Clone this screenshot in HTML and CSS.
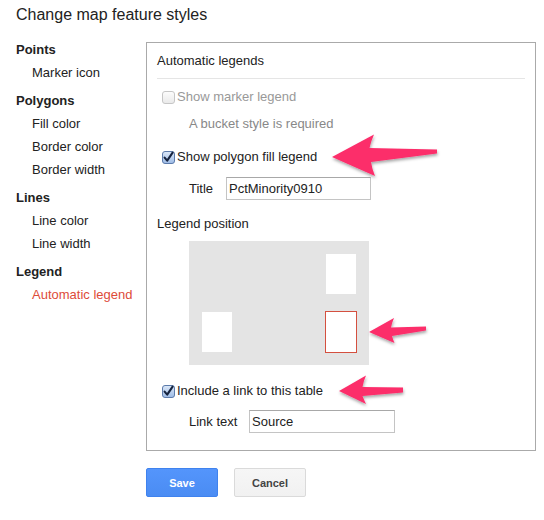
FILE: index.html
```html
<!DOCTYPE html>
<html>
<head>
<meta charset="utf-8">
<title>Change map feature styles</title>
<link rel="stylesheet" href="styles.css">
</head>
<body>
<h1 class="title">Change map feature styles</h1>
<div class="main">
  <nav class="nav">
    <div class="nav-group">
      <div class="nav-head">Points</div>
      <div class="nav-item">Marker icon</div>
    </div>
    <div class="nav-group">
      <div class="nav-head">Polygons</div>
      <div class="nav-item">Fill color</div>
      <div class="nav-item">Border color</div>
      <div class="nav-item">Border width</div>
    </div>
    <div class="nav-group">
      <div class="nav-head">Lines</div>
      <div class="nav-item">Line color</div>
      <div class="nav-item">Line width</div>
    </div>
    <div class="nav-group">
      <div class="nav-head">Legend</div>
      <div class="nav-item active">Automatic legend</div>
    </div>
  </nav>
  <div class="side">
    <section class="panel">
      <div class="panel-head">Automatic legends</div>
      <div class="check-row disabled r-marker">
        <span class="cb">
          <svg width="13" height="13" viewBox="0 0 13 13"><defs><linearGradient id="gu" x1="0" y1="0" x2="0" y2="1"><stop offset="0" stop-color="#fdfdfd"/><stop offset="1" stop-color="#e9e9e9"/></linearGradient></defs><rect x="0.5" y="0.5" width="12" height="12" rx="2.5" fill="url(#gu)" stroke="#c6c6c6"/></svg>
        </span>
        <span>Show marker legend</span>
      </div>
      <div class="note">A bucket style is required</div>
      <div class="check-row r-polygon">
        <span class="cb">
          <svg width="13" height="13" viewBox="0 0 13 13"><defs><linearGradient id="gc" x1="0" y1="0" x2="0" y2="1"><stop offset="0" stop-color="#dce8f8"/><stop offset="1" stop-color="#9dbbe6"/></linearGradient></defs><rect x="0.5" y="0.5" width="12" height="12" rx="2.5" fill="url(#gc)" stroke="#5c7bab"/><path d="M2.6 6.6 L5.2 9.6 L10.6 1.6" fill="none" stroke="#15233f" stroke-width="2.1" stroke-linecap="round" stroke-linejoin="round"/></svg>
        </span>
        <span>Show polygon fill legend</span>
      </div>
      <div class="field r-title">
        <label class="field-label lbl-title">Title</label>
        <input class="text-input in-title" type="text" value="PctMinority0910">
      </div>
      <div class="sub-head">Legend position</div>
      <div class="pos-map">
        <div class="pos-slot empty"></div>
        <div class="pos-slot right"></div>
        <div class="pos-slot"></div>
        <div class="pos-slot right selected"></div>
      </div>
      <div class="check-row r-link">
        <span class="cb">
          <svg width="13" height="13" viewBox="0 0 13 13"><rect x="0.5" y="0.5" width="12" height="12" rx="2.5" fill="url(#gc)" stroke="#5c7bab"/><path d="M2.6 6.6 L5.2 9.6 L10.6 1.6" fill="none" stroke="#15233f" stroke-width="2.1" stroke-linecap="round" stroke-linejoin="round"/></svg>
        </span>
        <span>Include a link to this table</span>
      </div>
      <div class="field r-linktext">
        <label class="field-label lbl-link">Link text</label>
        <input class="text-input in-link" type="text" value="Source">
      </div>
    </section>
    <div class="buttons">
      <button class="btn btn-primary">Save</button>
      <button class="btn btn-default">Cancel</button>
    </div>
  </div>
</div>
<svg class="annotations" width="544" height="520" viewBox="0 0 544 520">
  <defs>
    <filter id="sh" x="-20%" y="-40%" width="140%" height="180%">
      <feDropShadow dx="0.5" dy="2" stdDeviation="1.6" flood-color="#000" flood-opacity="0.35"/>
    </filter>
  </defs>
  <g fill="#fc2d6b" filter="url(#sh)">
    <path d="M332 157 L374 134.5 Q371 141 369.5 148 L437 149.5 L437 153.5 L371 162 Q372 169 375 176 Z"/>
    <path d="M369 332 L394 318 Q392 322.5 391 327.5 L426 326.5 L426 330.5 L392 336 Q393 339.5 394.5 343 Z"/>
    <path d="M339 391 L366 375.5 Q363.5 381 362.5 387 L403 387.5 L403 392.5 L362.5 396 Q364 400 366 404 Z"/>
  </g>
</svg>
</body>
</html>
```
FILE: styles.css
```css
body {
  margin: 0;
  font-family: "Liberation Sans", Arial, sans-serif;
  color: #222;
  background: #fff;
  position: relative;
  width: 544px;
  height: 520px;
  overflow: hidden;
}

.title {
  margin: 5px 0 0 16px;
  font-size: 16px;
  line-height: 20px;
  font-weight: normal;
  color: #222;
}

.main {
  display: flex;
  margin-top: 13px;
  padding-left: 16px;
}

.nav {
  width: 130px;
  font-size: 13px;
  line-height: 23px;
}

.nav-group + .nav-group {
  margin-top: 5px;
}

.nav-head {
  font-weight: bold;
}

.nav-item {
  padding-left: 16px;
}

.nav-item.active {
  color: #dd4b39;
}

.side {
  margin-top: 4px;
  display: flex;
  flex-direction: column;
}

.panel {
  box-sizing: border-box;
  width: 390px;
  border: 1px solid #aaa;
  padding: 0 10px 17px;
  font-size: 13px;
  line-height: 20px;
}

.panel-head {
  padding: 8px 0 7px;
  border-bottom: 1px solid #e5e5e5;
}

.check-row {
  display: flex;
  align-items: center;
  height: 20px;
}

.check-row .cb {
  display: flex;
  width: 13px;
  height: 13px;
  margin: 0 2px 0 5px;
}

.check-row.disabled {
  color: #999;
}

.r-marker { margin-top: 8px; }
.r-polygon { margin-top: 13px; }
.r-link { margin-top: 16px; }

.note {
  margin-top: 7px;
  padding-left: 32px;
  color: #888;
}

.field {
  display: flex;
  align-items: center;
  height: 23px;
  padding-left: 32px;
}

.r-title { margin-top: 10px; }
.r-linktext { margin-top: 9px; }

.field-label {
  color: #222;
}

.lbl-title { width: 37px; }
.lbl-link { width: 60px; }

.text-input {
  box-sizing: border-box;
  height: 23px;
  border: 1px solid #c4c4c4;
  border-top-color: #a8a8a8;
  padding: 0 2px;
  font-family: "Liberation Sans", Arial, sans-serif;
  font-size: 13px;
  color: #222;
  background: #fff;
  margin: 0;
  outline: none;
  border-radius: 0;
}

.in-title { width: 145px; }
.in-link { width: 146px; }

.sub-head {
  margin-top: 14px;
}

.pos-map {
  box-sizing: border-box;
  margin: 7px 0 0 32px;
  width: 180px;
  height: 124px;
  padding: 13px;
  background: #e4e4e4;
  display: grid;
  grid-template-columns: 30px 30px;
  grid-template-rows: 40px 40px;
  justify-content: space-between;
  align-content: space-between;
}

.pos-slot {
  background: #fff;
}

.pos-slot.empty {
  visibility: hidden;
}

.pos-slot.selected {
  outline: 1px solid #d4503f;
}

.buttons {
  display: flex;
  gap: 16px;
  margin-top: 17px;
}

.btn {
  box-sizing: border-box;
  width: 72px;
  height: 29px;
  border-radius: 2px;
  font-family: "Liberation Sans", Arial, sans-serif;
  font-size: 11px;
  font-weight: bold;
  padding: 0;
  margin: 0;
}

.btn-primary {
  background: linear-gradient(#5495fc, #4a8cf3);
  border: 1px solid #3f82ee;
  color: #fff;
}

.btn-default {
  background: linear-gradient(#f6f6f6, #f1f1f1);
  border: 1px solid #dadada;
  color: #444;
}

.annotations {
  position: absolute;
  left: 0;
  top: 0;
  pointer-events: none;
}
```
